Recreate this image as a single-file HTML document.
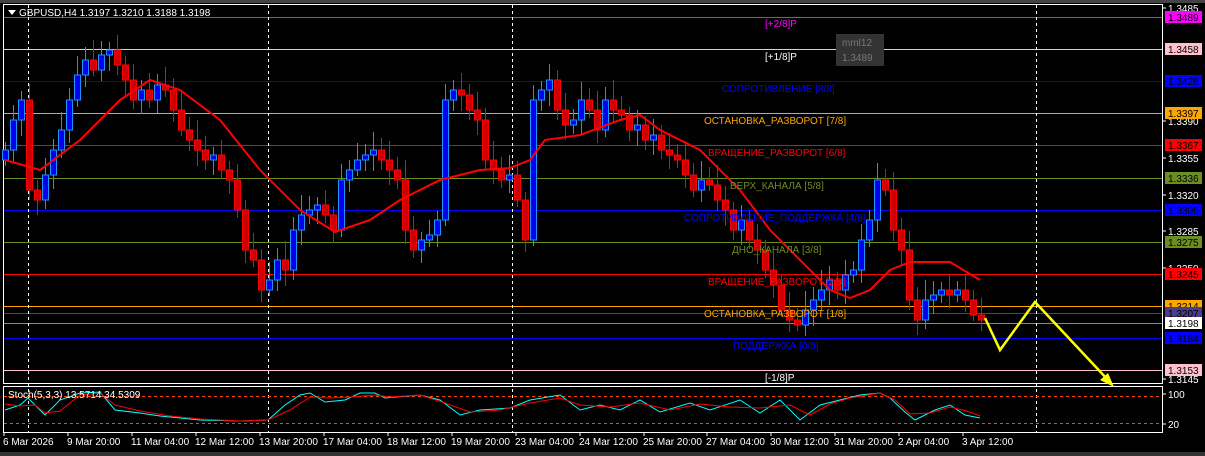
<!DOCTYPE html><html><head><meta charset="utf-8"><style>
html,body{margin:0;padding:0;background:#000;width:1205px;height:456px;overflow:hidden}
svg{display:block}
text{font-family:"Liberation Sans",sans-serif;font-size:10px}
</style></head><body>
<svg id="s" width="1205" height="456" xmlns="http://www.w3.org/2000/svg">
<rect width="1205" height="456" fill="#000"/>
<rect x="0" y="452" width="1205" height="4" fill="#333"/>
<rect x="0" y="0" width="1205" height="3" fill="#444"/>
<rect x="3.5" y="4.5" width="1159" height="379" fill="none" stroke="#fff"/>
<rect x="3.5" y="386.5" width="1159" height="46" fill="none" stroke="#fff"/>
<g id="lv"></g>
<g stroke="#fff" stroke-dasharray="3,3" stroke-width="1">
<line x1="28.5" y1="5" x2="28.5" y2="432"/><line x1="268.5" y1="5" x2="268.5" y2="432"/><line x1="512.5" y1="5" x2="512.5" y2="432"/><line x1="1036.5" y1="5" x2="1036.5" y2="432"/>
</g>
<g id="c"></g>
<path fill="none" stroke="#f00" stroke-width="2" d="M5,160 L40,170 L80,140 L120,100 L150,80 L180,90 L220,120 L260,170 L300,210 L335,232 L370,220 L400,200 L440,180 L480,170 L510,168 L530,160 L545,140 L580,135 L620,120 L640,115 L660,130 L700,150 L740,190 L770,230 L800,260 L830,290 L850,298 L870,290 L890,270 L910,262 L950,262 L980,280"/>
<g font-size="10">
<text x="765" y="27" fill="#f0f">[+2/8]P</text>
<text x="765" y="60" fill="#fff">[+1/8]P</text>
<text x="722" y="92" fill="#00f">СОПРОТИВЛЕНИЕ [8/8]</text>
<text x="704" y="124" fill="#ffa500">ОСТАНОВКА_РАЗВОРОТ [7/8]</text>
<text x="708" y="156" fill="#f00">ВРАЩЕНИЕ_РАЗВОРОТ [6/8]</text>
<text x="730" y="189" fill="#6b8e23">ВЕРХ_КАНАЛА [5/8]</text>
<text x="684" y="221" fill="#00f">СОПРОТИВЛЕНИЕ_ПОДДЕРЖКА [4/8]</text>
<text x="732" y="253" fill="#6b8e23">ДНО_КАНАЛА [3/8]</text>
<text x="708" y="285" fill="#f00">ВРАЩЕНИЕ_РАЗВОРОТ [2/8]</text>
<text x="704" y="317" fill="#ffa500">ОСТАНОВКА_РАЗВОРОТ [1/8]</text>
<text x="733" y="349" fill="#00f">ПОДДЕРЖКА [0/8]</text>
<text x="765" y="381" fill="#fff">[-1/8]P</text>
</g>
<rect x="836" y="34" width="48" height="32" fill="#333"/>
<text x="842" y="46" fill="#777">mml12</text><text x="842" y="61" fill="#777">1.3489</text>
<polyline fill="none" stroke="#ff0" stroke-width="2.5" points="985,318 1000,350 1035,302 1108,380"/>
<polygon fill="#ff0" points="1114,387 1100,380 1108,373"/>
<polygon fill="#fff" points="8,10 16,10 12,15"/>
<text x="19" y="16" fill="#fff">GBPUSD,H4  1.3197 1.3210 1.3188 1.3198</text>
<g stroke="#ff4500" stroke-dasharray="3,3"><line x1="4" y1="396.5" x2="1162" y2="396.5"/><line x1="4" y1="423.5" x2="1162" y2="423.5"/></g>
<path fill="none" stroke="#0ff" d="M5,410 L20,405 L28,398 L45,415 L60,400 L80,393 L100,392 L115,410 L140,413 L160,416 L180,418 L200,420 L240,421 L268,420 L285,405 L300,395 L310,393 L325,402 L345,400 L360,393 L375,393 L385,398 L420,395 L440,400 L460,415 L480,410 L510,408 L530,400 L560,395 L580,410 L600,405 L620,410 L640,400 L660,412 L690,403 L710,410 L740,400 L760,413 L780,400 L800,420 L820,405 L840,400 L860,395 L880,393 L890,398 L905,412 L915,420 L935,410 L950,405 L965,415 L980,418"/>
<path fill="none" stroke="#f00" d="M5,404 L20,406 L35,405 L45,413 L60,411 L80,395 L100,393 L115,405 L140,411 L170,416 L200,419 L240,421 L268,420 L290,410 L310,397 L330,398 L350,397 L375,395 L390,397 L420,395 L445,403 L470,412 L500,410 L530,403 L560,398 L580,405 L610,407 L640,403 L670,410 L700,404 L730,407 L760,408 L790,405 L810,415 L830,404 L850,398 L880,393 L895,400 L910,414 L930,413 L950,407 L970,412 L980,416"/>
<text x="8" y="398" fill="#fff">Stoch(5,3,3) 13.5714 34.5309</text>
<g id="ax"></g>
</svg>
<script>
var ns="http://www.w3.org/2000/svg";
function el(p,t,a,tx){var e=document.createElementNS(ns,t);for(var k in a)e.setAttribute(k,a[k]);if(tx)e.textContent=tx;document.getElementById(p).appendChild(e);return e;}
var L=[[17,"#f0f","1.3489","#f0f","#000"],[49,"#ffc0cb","1.3458","#ffc0cb","#000"],[81,"#00f","1.3428","#00f","#000"],[113,"#ffa500","1.3397","#ffa500","#000"],[145,"#f00","1.3367","#f00","#000"],[178,"#6b8e23","1.3336","#6b8e23","#000"],[210,"#00f","1.3306","#00f","#000"],[242,"#6b8e23","1.3275","#6b8e23","#000"],[274,"#f00","1.3245","#f00","#000"],[306,"#ffa500","1.3214","#ffa500","#000"],[313,"#483d8b","1.3207","#483d8b","#000"],[323,"#888","1.3198","#fff","#000"],[338,"#00f","1.3184","#00f","#000"],[370,"#ffc0cb","1.3153","#ffc0cb","#000"]];
L.forEach(function(l){el("lv","line",{x1:4,x2:1162,y1:l[0]+.5,y2:l[0]+.5,stroke:l[1]});});
var T=[[8,"1.3485"],[121,"1.3390"],[158,"1.3355"],[195,"1.3320"],[231,"1.3285"],[268,"1.3250"],[379,"1.3145"],[394,"100"],[424,"20"]];
T.forEach(function(t){el("ax","line",{x1:1162,x2:1166,y1:t[0],y2:t[0],stroke:"#fff"});el("ax","text",{x:1168,y:t[0]+4,fill:"#fff"},t[1]);});
L.forEach(function(l){el("ax","rect",{x:1165,y:l[0]-6,width:37,height:12,fill:l[3]});el("ax","text",{x:1168,y:l[0]+4,fill:l[4]},l[2]);});
var X=[["6 Mar 2026",3],["9 Mar 20:00",67],["11 Mar 04:00",131],["12 Mar 12:00",195],["13 Mar 20:00",259],["17 Mar 04:00",323],["18 Mar 12:00",387],["19 Mar 20:00",451],["23 Mar 04:00",515],["24 Mar 12:00",579],["25 Mar 20:00",643],["27 Mar 04:00",706],["30 Mar 12:00",770],["31 Mar 20:00",834],["2 Apr 04:00",898],["3 Apr 12:00",962]];
X.forEach(function(x){el("ax","line",{x1:x[1]+1,x2:x[1]+1,y1:432,y2:436,stroke:"#fff"});el("ax","text",{x:x[1],y:445,fill:"#fff"},x[0]);});
var C=[150,120,100,190,200,175,150,130,100,75,60,70,55,50,65,80,100,90,100,85,90,110,130,140,150,160,155,170,180,210,250,260,290,280,260,270,230,215,210,205,215,230,180,170,160,155,150,160,170,180,230,250,240,235,220,100,90,95,110,120,160,170,180,175,200,240,100,90,80,110,125,120,100,110,130,100,110,115,130,125,140,135,150,155,160,175,190,180,185,200,210,230,220,240,250,270,285,310,320,325,310,300,290,280,290,275,270,240,220,180,190,230,250,300,320,300,295,290,295,290,300,315,320];
var p=160;
C.forEach(function(c,i){var x=5+i*8,o=p,top=Math.min(o,c),bot=Math.max(o,c),up=c<o;
var w1=top-8-(i*7%13),w2=bot+6+(i*5%11);
el("c","line",{x1:x+.5,x2:x+.5,y1:w1,y2:w2,stroke:up?"#1e90ff":"#f00"});
el("c","rect",{x:x-2.5,y:top,width:6,height:Math.max(bot-top,1),fill:up?"#0000ee":"#c00",stroke:up?"#1e90ff":"#f00"});p=c;});
</script>
</body></html>
